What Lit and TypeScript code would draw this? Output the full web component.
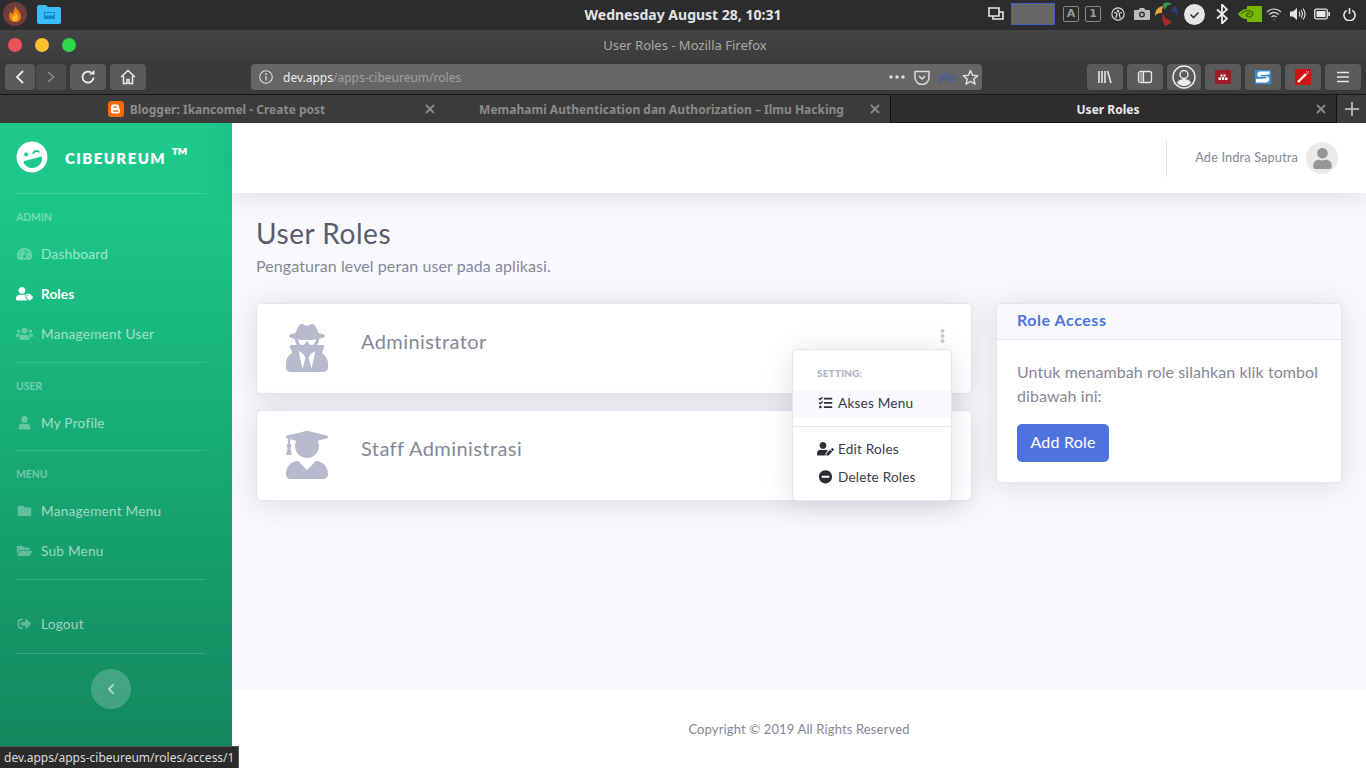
import { LitElement, html, css, svg } from 'lit';
import { customElement } from 'lit/decorators.js';

const fa = (vb: number, d: string) =>
  html`<svg viewBox="0 0 ${vb} 512" fill="currentColor" aria-hidden="true">${svg`<path d=${d}></path>`}</svg>`;

const I = {
  laugh: fa(496, 'M248 8C111 8 0 119 0 256s111 248 248 248 248-111 248-248S385 8 248 8zm20.1 198.1c4-25.2 34.2-42.1 59.9-42.1s55.9 16.9 59.9 42.1c1.7 11.1-11.4 18.3-19.8 10.8l-9.5-8.5c-14.8-13.2-46.2-13.2-61 0L288 217c-8.4 7.4-21.6.3-19.9-10.9zM168 160c17.7 0 32 14.3 32 32s-14.3 32-32 32-32-14.3-32-32 14.3-32 32-32zm230.9 146C390 377 329.4 432 256 432h-16c-73.4 0-134-55-142.9-126-1.2-9.5 6.3-18 15.9-18h270c9.6 0 17.1 8.4 15.9 18z'),
  dash: fa(576, 'M288 32C128.94 32 0 160.94 0 320c0 52.8 14.25 102.26 39.06 144.8 5.61 9.62 16.3 15.2 27.44 15.2h443c11.14 0 21.83-5.58 27.44-15.2C561.75 422.26 576 372.8 576 320c0-159.06-128.94-288-288-288zm0 64c14.71 0 26.58 10.13 30.32 23.65-1.11 2.26-2.64 4.23-3.45 6.67l-9.22 27.67c-5.13 3.49-10.97 6.01-17.64 6.01-17.67 0-32-14.33-32-32S270.33 96 288 96zM96 384c-17.67 0-32-14.33-32-32s14.33-32 32-32 32 14.33 32 32-14.33 32-32 32zm48-160c-17.67 0-32-14.33-32-32s14.33-32 32-32 32 14.33 32 32-14.33 32-32 32zm246.77-72.41l-61.33 184C343.13 347.33 352 364.54 352 384c0 11.72-3.38 22.55-8.88 32H232.88c-5.5-9.45-8.88-20.28-8.88-32 0-33.94 26.5-61.43 59.9-63.59l61.34-184.01c4.17-12.56 17.73-19.45 30.36-15.17 12.57 4.19 19.35 17.77 15.17 30.36zm14.66 57.2l15.52-46.55c3.47-1.29 7.13-2.23 11.05-2.23 17.67 0 32 14.33 32 32s-14.33 32-32 32c-11.38-.01-20.89-6.28-26.57-15.22zM480 384c-17.67 0-32-14.33-32-32s14.33-32 32-32 32 14.33 32 32-14.33 32-32 32z'),
  userTag: fa(640, 'M630.6 364.9l-90.3-90.2c-12-12-28.3-18.7-45.3-18.7h-79.3c-17.7 0-32 14.3-32 32v79.2c0 17 6.7 33.2 18.7 45.2l90.3 90.2c12.5 12.5 32.8 12.5 45.3 0l92.5-92.5c12.6-12.5 12.6-32.7.1-45.2zm-182.8-21c-13.3 0-24-10.7-24-24s10.7-24 24-24 24 10.7 24 24c0 13.2-10.7 24-24 24zm-223.8-88c70.7 0 128-57.3 128-128C352 57.3 294.7 0 224 0S96 57.3 96 128c0 70.6 57.3 127.9 128 127.9zm127.8 111.2V294c-12.2-3.6-24.9-6.2-38.2-6.2h-16.7c-22.2 10.2-46.9 16-72.9 16s-50.6-5.8-72.9-16h-16.7C60.2 287.9 0 348.1 0 422.3v41.6c0 26.5 21.5 48 48 48h352c15.5 0 29.1-7.5 37.9-18.9l-58-58c-18.1-18.1-28.1-42.2-28.1-67.9z'),
  users: fa(640, 'M96 224c35.3 0 64-28.7 64-64s-28.7-64-64-64-64 28.7-64 64 28.7 64 64 64zm448 0c35.3 0 64-28.7 64-64s-28.7-64-64-64-64 28.7-64 64 28.7 64 64 64zm32 32h-64c-17.6 0-33.5 7.1-45.1 18.6 40.3 22.1 68.9 62 75.1 109.4h66c17.7 0 32-14.3 32-32v-32c0-35.3-28.7-64-64-64zm-256 0c61.9 0 112-50.1 112-112S381.9 32 320 32 208 82.1 208 144s50.1 112 112 112zm76.8 32h-8.3c-20.8 10-43.9 16-68.5 16s-47.6-6-68.5-16h-8.3C179.6 288 128 339.6 128 403.2V432c0 26.5 21.5 48 48 48h288c26.5 0 48-21.5 48-48v-28.8c0-63.6-51.6-115.2-115.2-115.2zm-223.7-13.4C161.5 263.1 145.6 256 128 256H64c-35.3 0-64 28.7-64 64v32c0 17.7 14.3 32 32 32h65.9c6.3-47.4 34.9-87.3 75.2-109.4z'),
  user: fa(448, 'M224 256c70.7 0 128-57.3 128-128S294.7 0 224 0 96 57.3 96 128s57.3 128 128 128zm89.6 32h-16.7c-22.2 10.2-46.9 16-72.9 16s-50.6-5.8-72.9-16h-16.7C60.2 288 0 348.2 0 422.4V464c0 26.5 21.5 48 48 48h352c26.5 0 48-21.5 48-48v-41.6c0-74.2-60.2-134.4-134.4-134.4z'),
  folder: fa(512, 'M464 128H272l-64-64H48C21.49 64 0 85.49 0 112v288c0 26.51 21.49 48 48 48h416c26.51 0 48-21.49 48-48V176c0-26.51-21.49-48-48-48z'),
  folderOpen: fa(576, 'M572.694 292.093L500.27 416.248A63.997 63.997 0 0 1 444.989 448H45.025c-18.523 0-30.064-20.093-20.731-36.093l72.424-124.155A64 64 0 0 1 152 256h399.964c18.523 0 30.064 20.093 20.73 36.093zM152 224h328v-48c0-26.51-21.49-48-48-48H272l-64-64H48C21.49 64 0 85.49 0 112v278.046l69.077-118.418C86.214 242.25 117.989 224 152 224z'),
  signOut: fa(512, 'M497 273L329 441c-15 15-41 4.5-41-17v-96H152c-13.3 0-24-10.7-24-24v-96c0-13.3 10.7-24 24-24h136V88c0-21.4 25.9-32 41-17l168 168c9.3 9.4 9.3 24.6 0 34zM192 436v-40c0-6.6-5.4-12-12-12H96c-17.7 0-32-14.3-32-32V160c0-17.7 14.3-32 32-32h84c6.6 0 12-5.4 12-12V76c0-6.6-5.4-12-12-12H96c-53 0-96 43-96 96v192c0 53 43 96 96 96h84c6.6 0 12-5.4 12-12z'),
  secret: fa(448, 'M383.9 308.3l23.9-62.6c4-10.5-3.7-21.7-15-21.7h-58.5c11-18.9 17.8-40.6 17.8-64v-.3c39.2-7.8 64-19.1 64-31.7 0-13.3-27.3-25.1-70.1-33-9.2-32.8-27-65.8-40.6-82.8-9.5-11.9-25.9-15.6-39.5-8.8l-27.6 13.8c-9 4.5-19.6 4.5-28.6 0L182.1 3.4c-13.6-6.8-30-3.1-39.5 8.8-13.5 17-31.4 50-40.6 82.8-42.7 7.9-70 19.7-70 33 0 12.6 24.8 23.9 64 31.7v.3c0 23.4 6.8 45.1 17.8 64H56.3c-11.5 0-19.2 11.7-14.7 22.3l25.8 60.2C27.3 329.8 0 372.7 0 422.4v44.8C0 491.9 20.1 512 44.8 512h358.4c24.7 0 44.8-20.1 44.8-44.8v-44.8c0-48.4-25.8-90.4-64.1-114.1zM176 480l-41.6-192 49.6 32 24 40-32 120zm96 0l-32-120 24-40 49.6-32L272 480zm41.7-298.5c-3.9 11.9-7 24.6-16.5 33.4-10.1 9.3-48 22.4-64-25-2.8-8.4-15.4-8.4-18.3 0-17 50.2-56 32.4-64 25-9.5-8.8-12.7-21.5-16.5-33.4-.8-2.5-6.3-5.7-6.3-5.8v-10.8c28.3 3.6 61 5.8 96 5.8s67.7-2.1 96-5.8v10.8c-.1.1-5.6 3.2-6.4 5.8z'),
  grad: fa(448, 'M319.4 320.6L224 416l-95.4-95.4C57.1 323.7 0 382.2 0 454.4v9.6c0 26.5 21.5 48 48 48h352c26.5 0 48-21.5 48-48v-9.6c0-72.2-57.1-130.7-128.6-133.8zM13.6 79.8l6.4 1.5v58.4c-7 4.2-12 11.5-12 20.3 0 8.4 4.6 15.4 11.1 19.7L3.5 242c-1.7 6.9 2.1 14 7.6 14h41.8c5.5 0 9.3-7.1 7.6-14l-15.6-62.3C51.4 175.4 56 168.4 56 160c0-8.8-5-16.1-12-20.3V87.1l66 15.9c-8.6 17.2-14 36.4-14 57 0 70.7 57.3 128 128 128s128-57.3 128-128c0-20.6-5.3-39.8-14-57l96.3-23.2c18.2-4.4 18.2-27.1 0-31.5l-190.4-46c-13-3.1-26.7-3.1-39.7 0L13.6 48.2c-18.1 4.4-18.1 27.2 0 31.6z'),
  tasks: fa(512, 'M139.61 35.5a12 12 0 0 0-17 0L58.93 98.81l-22.7-22.12a12 12 0 0 0-17 0L3.53 92.41a12 12 0 0 0 0 17l47.59 47.4a12.78 12.78 0 0 0 17.61 0l15.59-15.62L156.52 69a12.09 12.09 0 0 0 .09-17zm0 159.19a12 12 0 0 0-17 0l-63.68 63.72-22.7-22.1a12 12 0 0 0-17 0L3.53 252a12 12 0 0 0 0 17L51 316.5a12.77 12.77 0 0 0 17.6 0l15.7-15.69 72.2-72.22a12 12 0 0 0 .09-16.9zM64 368c-26.49 0-48.59 21.5-48.59 48S37.53 464 64 464a48 48 0 0 0 0-96zm432 16H208a16 16 0 0 0-16 16v32a16 16 0 0 0 16 16h288a16 16 0 0 0 16-16v-32a16 16 0 0 0-16-16zm0-320H208a16 16 0 0 0-16 16v32a16 16 0 0 0 16 16h288a16 16 0 0 0 16-16V80a16 16 0 0 0-16-16zm0 160H208a16 16 0 0 0-16 16v32a16 16 0 0 0 16 16h288a16 16 0 0 0 16-16v-32a16 16 0 0 0-16-16z'),
  userEdit: fa(640, 'M224 256c70.7 0 128-57.3 128-128S294.7 0 224 0 96 57.3 96 128s57.3 128 128 128zm89.6 32h-16.7c-22.2 10.2-46.9 16-72.9 16s-50.6-5.8-72.9-16h-16.7C60.2 288 0 348.2 0 422.4V464c0 26.5 21.5 48 48 48h274.9c-2.4-6.8-3.4-14-2.6-21.3l6.8-60.9 1.2-11.1 7.9-7.9 77.3-77.3c-24.5-27.7-60-45.5-99.9-45.5zm45.3 145.3l-6.8 61c-1.1 10.2 7.5 18.8 17.6 17.6l60.9-6.8 137.9-137.9-71.7-71.7-137.9 137.8zM633 268.9L595.1 231c-9.3-9.3-24.5-9.3-33.8 0l-37.8 37.8-4.1 4.1 71.8 71.7 41.8-41.8c9.3-9.4 9.3-24.5 0-33.9z'),
  minus: fa(512, 'M256 8C119 8 8 119 8 256s111 248 248 248 248-111 248-248S393 8 256 8zM124 296c-6.6 0-12-5.4-12-12v-56c0-6.6 5.4-12 12-12h264c6.6 0 12 5.4 12 12v56c0 6.6-5.4 12-12 12H124z'),
  chevron: fa(320, 'M34.52 239.03L228.87 44.69c9.37-9.37 24.57-9.37 33.94 0l22.67 22.67c9.36 9.36 9.37 24.52.04 33.9L131.49 256l154.02 154.75c9.34 9.38 9.32 24.54-.04 33.9l-22.67 22.67c-9.37 9.37-24.57 9.37-33.94 0L34.52 272.97c-9.37-9.37-9.37-24.57 0-33.94z'),
};

// free-form icons of the desktop and browser chrome
const ico = (vb: string, body: unknown) =>
  html`<svg viewBox=${vb} aria-hidden="true">${body}</svg>`;

const tray = [
  { w: 16, gap: 0, icon: ico('0 0 16 16', svg`<path d="M1 2h10v8H1z M5 10v3h10V6h-4" fill="none" stroke="#e6e6e6" stroke-width="1.600"/>`) },
  { w: 44, gap: 7, icon: html`<span class="wsbox"></span>` },
  { w: 16, gap: 8, icon: html`<span class="key">A</span>` },
  { w: 16, gap: 6, icon: html`<span class="key">1</span>` },
  { w: 14, gap: 10, icon: ico('0 0 16 16', svg`<circle cx="8" cy="8" r="7" fill="none" stroke="#ddd" stroke-width="1.300"/><circle cx="8" cy="4.500" r="1.400" fill="#ddd"/><path d="M3.500 6.300l3 .7v2.200L5.200 13M12.500 6.300l-3 .7v2.200l1.300 3.800" fill="none" stroke="#ddd" stroke-width="1.400"/>`) },
  { w: 16, gap: 9, icon: ico('0 0 16 14', svg`<path d="M1 3h3.500L6 1h4l1.500 2H15a1 1 0 0 1 1 1v8a1 1 0 0 1-1 1H1a1 1 0 0 1-1-1V4a1 1 0 0 1 1-1z" fill="#bbb"/><circle cx="8" cy="7.500" r="3" fill="#333"/><circle cx="8" cy="7.500" r="1.500" fill="#bbb"/>`) },
  { w: 23, gap: 5, icon: ico('0 0 23 24', svg`<path d="M0 14C0 8 3 4.500 9 4 7 6.500 6.500 9 7 11 4 10.500 2 11.500 0 14z" fill="#eda53a"/><path d="M8 2c2-2 6-2 9 0-3 0-6 2-7.500 6C9.500 6 9 4 8 2z" fill="#3f9a52"/><path d="M18.500 3C22 5.500 23.500 9 22 14c-.5-2.500-2.500-4.500-6.500-5 2-1.500 3.500-3.500 3-6z" fill="#23407f"/><path d="M8 11c1 4 4 7 8.500 8-1.500 3-4 4.500-6.500 5C7.500 20 6.500 15 8 11z" fill="#a62a26"/>`) },
  { w: 21, gap: 6, icon: ico('0 0 21 21', svg`<circle cx="10.500" cy="10.500" r="10.500" fill="#e6e6e6"/><path d="M6.500 10.500l3 3 5-5" fill="none" stroke="#3a3a3a" stroke-width="1.600"/>`) },
  { w: 12, gap: 11, icon: ico('0 0 12 20', svg`<path d="M1 5.500l10 9-5 5V.500l5 5-10 9" fill="none" stroke="#eee" stroke-width="1.800"/>`) },
  { w: 24, gap: 10, icon: ico('0 0 24 16', svg`<path d="M9 0h15v16H9v-3c-4 0-7-2-9-5 2-3 5-5 9-5z" fill="#7ab800"/><path d="M3 8c3-3.500 8-4.500 11-2 2 2 0 5-3 5-2 0-3-1.500-2-3s3-1 3 .5" fill="none" stroke="#3b5a00" stroke-width="1.100"/>`) },
  { w: 16, gap: 4, icon: ico('0 0 16 14', svg`<path d="M1 5c4-4 10-4 14 0M3.200 7.500c3-2.700 6.600-2.700 9.600 0M5.500 10c1.500-1.300 3.500-1.300 5 0" fill="none" stroke="#ddd" stroke-width="1.100"/><circle cx="8" cy="12.500" r="1" fill="#666"/>`) },
  { w: 16, gap: 8, icon: ico('0 0 16 14', svg`<path d="M0 4.500h3L7 1v12L3 9.500H0z" fill="#e6e6e6"/><path d="M9 4.500c1 1.500 1 3.500 0 5M11 3c1.800 2.500 1.800 5.500 0 8M13 1.500c2.600 3.500 2.600 7.500 0 11" fill="none" stroke="#e6e6e6" stroke-width="1.100"/>`) },
  { w: 16, gap: 8, icon: ico('0 0 16 12', svg`<rect x=".7" y="1.200" width="12.600" height="9.600" rx="1.500" fill="none" stroke="#e6e6e6" stroke-width="1.300"/><rect x="2.500" y="3" width="9" height="6" fill="#e6e6e6"/><rect x="14.300" y="4" width="1.700" height="4" fill="#e6e6e6"/>`) },
  { w: 13, gap: 13, icon: ico('0 0 14 14', svg`<path d="M4 2.500a6 6 0 1 0 6 0" fill="none" stroke="#e6e6e6" stroke-width="1.700"/><path d="M7 0v6.500" stroke="#e6e6e6" stroke-width="1.700"/>`) },
];

const rightButtons = [
  ico('0 0 16 16', svg`<path d="M2 2v12M5 2v12M8 2v12M10.500 2l3.500 12" fill="none" stroke="#e6e6e6" stroke-width="1.600"/>`),
  ico('0 0 16 16', svg`<rect x="1.500" y="2.500" width="13" height="11" rx="2" fill="none" stroke="#e6e6e6" stroke-width="1.300"/><path d="M6.500 3v10" stroke="#e6e6e6" stroke-width="1.300"/><rect x="2.500" y="3.500" width="3.500" height="9" fill="#9c9c9c"/>`),
  null,
  ico('0 0 16 16', svg`<rect y="1" width="16" height="14" fill="#9d1c28"/><path d="M5.500 5.500h2v2h-2zM8.500 5.500h2v2h-2zM3.500 8.500h2.500v2.500H3.500zM6.800 8h2.400v3H6.800zM10 8.500h2.500v2.500H10z" fill="#fff"/>`),
  ico('0 0 16 16', svg`<rect y="1" width="16" height="14" fill="#3d8fd1"/><path d="M15 2.500L5 2.500C1.500 3 1.500 7.500 4.500 8h6.500c.8.3.6 1.500-.2 1.600L1 10v3.500h10c3.500-.5 4.500-4.500 1.500-6H6c-.8-.2-.6-1.400.2-1.500L14 5.500z" fill="#fff"/>`),
  ico('0 0 16 16', svg`<rect width="16" height="16" fill="#cf1414"/><path d="M3 13l8-8" stroke="#fff" stroke-width="2.400"/><path d="M11.500 2.500l.5 1M13.500 4l-1 .5M13.500 2.500l-.5.500" stroke="#fff" stroke-width="1"/>`),
  ico('0 0 16 16', svg`<path d="M2 3.500h12M2 8h12M2 12.500h12" stroke="#e6e6e6" stroke-width="1.700"/>`),
];

const sections = [
  {
    title: 'ADMIN',
    items: [
      { label: 'Dashboard', icon: I.dash },
      { label: 'Roles', icon: I.userTag, active: true },
      { label: 'Management User', icon: I.users },
    ],
  },
  { title: 'USER', items: [{ label: 'My Profile', icon: I.user }] },
  {
    title: 'MENU',
    items: [
      { label: 'Management Menu', icon: I.folder },
      { label: 'Sub Menu', icon: I.folderOpen },
    ],
  },
];

const tabs = [
  { label: 'Blogger: Ikancomel - Create post', favicon: true },
  { label: 'Memahami Authentication dan Authorization – Ilmu Hacking' },
  { label: 'User Roles', current: true },
];

@customElement('app-root')
export class AppRoot extends LitElement {
  static styles = css`
    :host {
      display: block;
      width: 1366px;
      height: 768px;
      overflow: hidden;
      position: relative;
      font-family: 'Lato', 'Noto Sans', sans-serif;
      color: #858796;
    }

    svg {
      display: block;
    }

    /* desktop bar */
    .desktop {
      height: 30px;
      box-sizing: border-box;
      padding-bottom: 2px;
      background: #2a2c2e;
      display: grid;
      grid-template-columns: 1fr auto 1fr;
      align-items: center;
    }
    .launcher {
      display: flex;
      align-items: center;
      padding-left: 3px;
    }
    .flame {
      width: 24px;
      height: 24px;
      border-radius: 50%;
      background: #6f3d3b;
      display: flex;
      align-items: center;
      justify-content: center;
    }
    .flame svg {
      width: 14px;
      height: 16px;
    }
    .files {
      width: 24px;
      height: 19px;
      margin-left: 10px;
    }
    .clock {
      font: 700 14px 'Noto Sans', sans-serif;
      color: #e4e4e4;
    }
    .tray {
      display: flex;
      align-items: center;
      justify-content: flex-end;
      padding-right: 10px;
    }
    .tray-item {
      flex: none;
      display: flex;
      align-items: center;
      justify-content: center;
    }
    .tray-item svg {
      width: 100%;
    }
    .wsbox {
      display: block;
      width: 44px;
      height: 22px;
      box-sizing: border-box;
      background: #666;
      border: 1px solid #3f5fc4;
    }
    .key {
      display: block;
      width: 16px;
      height: 16px;
      box-sizing: border-box;
      border: 1px solid #888;
      border-radius: 2px;
      color: #999;
      font: 700 11px/14px 'DejaVu Sans', sans-serif;
      text-align: center;
    }

    /* window title */
    .titlebar {
      height: 29px;
      background: linear-gradient(#444, #3c3c3c);
      display: grid;
      grid-template-columns: 1fr auto 1fr;
      align-items: center;
      color: #a8a8a8;
      font: 13px 'Noto Sans', sans-serif;
    }
    .title-text {
      padding-left: 4px;
    }
    .lights {
      display: flex;
      gap: 13px;
      padding-left: 8px;
    }
    .light {
      width: 14px;
      height: 14px;
      border-radius: 50%;
    }
    .red {
      background: #f0505a;
    }
    .yellow {
      background: #fdbf2d;
    }
    .green {
      background: #2fd84a;
    }

    /* toolbar */
    .toolbar {
      height: 36px;
      box-sizing: border-box;
      padding: 5px 5px 5px;
      background: #3a3a3a;
      border-bottom: 1px solid #161616;
      display: flex;
      align-items: flex-start;
    }
    .btn {
      flex: none;
      height: 26px;
      width: 36px;
      border-radius: 4px;
      background: #5b5b5b;
      display: flex;
      align-items: center;
      justify-content: center;
    }
    .btn svg {
      width: 16px;
      height: 16px;
    }
    .btn.nav {
      width: 30px;
    }
    .btn.off {
      background: #4c4c4c;
    }
    .back {
      margin-right: 1px;
    }
    .reload {
      margin-left: 4px;
    }
    .home {
      margin-left: 4px;
    }
    .urlbar {
      flex: none;
      width: 731px;
      height: 26px;
      margin: 0 105px 0 105px;
      box-sizing: border-box;
      padding: 0 3px 0 8px;
      border-radius: 4px;
      background: #666;
      display: flex;
      align-items: center;
      font: 12px 'Noto Sans', sans-serif;
      color: #a0a0a0;
    }
    .urlbar .info {
      width: 14px;
      height: 14px;
      margin-right: 10px;
    }
    .urlbar b {
      font-weight: 400;
      color: #eee;
    }
    .url {
      flex: 1;
    }
    .url-actions {
      display: flex;
      align-items: center;
    }
    .dots {
      width: 16px;
      height: 4px;
      margin-right: 9px;
    }
    .pocket {
      width: 16px;
      height: 15px;
      margin-right: 8px;
    }
    .php {
      font: italic 700 10px 'Liberation Sans', sans-serif;
      color: #4a5a96;
      width: 24px;
    }
    .star {
      width: 17px;
      height: 17px;
    }
    .right-btns {
      display: flex;
      gap: 4px;
    }
    .right-btns .btn.avatar {
      width: 34px;
    }
    .right-btns .btn.avatar svg {
      width: 24px;
      height: 24px;
    }

    /* tabs */
    .tabs {
      height: 28px;
      background: #3c3c3c;
      display: flex;
      font: 700 12px 'Noto Sans', sans-serif;
      color: #8c8c8c;
    }
    .tab {
      flex: none;
      width: 445px;
      box-sizing: border-box;
      display: flex;
      align-items: center;
      justify-content: center;
      position: relative;
      padding-right: 12px;
      gap: 6px;
    }
    .tab.current {
      width: 447px;
      padding: 1px 11px 0 0;
      background: #2e2e2e;
      color: #f0f0f0;
      border-left: 1px solid #111;
      border-right: 1px solid #111;
      border-bottom: 1px solid #111;
    }
    .tab .close {
      position: absolute;
      right: 10px;
      top: 9px;
      width: 10px;
      height: 10px;
      color: #8c8c8c;
    }
    .favicon {
      width: 16px;
      height: 16px;
      border-radius: 3px;
      background: #f36a10;
      color: #fff;
    }
    .plus {
      flex: 1;
      display: flex;
      align-items: center;
      justify-content: center;
    }
    .plus svg {
      width: 14px;
      height: 14px;
    }

    /* app */
    .app {
      height: 645px;
      display: flex;
    }
    .sidebar {
      flex: none;
      width: 232px;
      box-sizing: border-box;
      padding: 0 26px 0 16px;
      background: linear-gradient(180deg, #1cc88a 10%, #13855c 100%);
      color: rgba(255, 255, 255, 0.6);
    }
    .brand {
      height: 70px;
      display: flex;
      align-items: center;
      color: #fff;
    }
    .brand-icon {
      flex: none;
      width: 32px;
      height: 32px;
      transform: rotate(-15deg);
      margin-top: -2px;
    }
    .brand-icon svg {
      width: 32px;
      height: 32px;
    }
    .brand-text {
      margin-left: 17px;
      font-size: 15px;
      font-weight: 800;
      letter-spacing: 1.4px;
      white-space: nowrap;
      margin-top: -2px;
    }
    .brand-text span {
      font-size: 22px;
      font-weight: 700;
      line-height: 15px;
    }
    .rule {
      height: 1px;
      background: rgba(255, 255, 255, 0.15);
    }
    .section {
      margin-bottom: 8px;
    }
    .heading {
      height: 39.5px;
      box-sizing: border-box;
      padding-top: 7px;
      display: flex;
      align-items: center;
      font-size: 10.4px;
      font-weight: 700;
      color: rgba(255, 255, 255, 0.4);
    }
    .item {
      height: 40px;
      box-sizing: border-box;
      padding-top: 1.5px;
      display: flex;
      align-items: center;
      font-size: 13.6px;
      letter-spacing: 0.25px;
    }
    .item.active {
      color: #fff;
      font-weight: 700;
      letter-spacing: 0.1px;
    }
    .item svg {
      flex: none;
      width: 17px;
      height: 13.6px;
      margin-right: 8px;
      opacity: 0.55;
    }
    .item.active svg {
      opacity: 1;
    }
    .logout {
      margin: 24px 0 9px;
    }
    .toggle {
      width: 40px;
      height: 40px;
      border-radius: 50%;
      margin: 15.5px 0 0 75px;
      background: rgba(255, 255, 255, 0.2);
      color: rgba(255, 255, 255, 0.6);
      display: flex;
      align-items: center;
      justify-content: center;
    }
    .toggle svg {
      width: 8px;
      height: 12px;
    }

    .main {
      flex: 1;
      display: flex;
      flex-direction: column;
      min-width: 0;
      background: #f8f9fc;
    }
    .topbar {
      flex: none;
      height: 70px;
      box-sizing: border-box;
      background: #fff;
      box-shadow: 0 0.15rem 1.75rem rgba(58, 59, 69, 0.15);
      display: flex;
      align-items: center;
      justify-content: flex-end;
      padding-right: 28px;
      position: relative;
      font-size: 12.8px;
    }
    .topbar-rule {
      width: 1px;
      height: 38px;
      background: #e3e6f0;
      margin-right: 28px;
    }
    .user-name {
      padding-bottom: 2px;
      letter-spacing: 0.12px;
    }
    .avatar-round {
      width: 32px;
      height: 32px;
      margin-left: 8px;
      border-radius: 50%;
      background: #eaeaea;
      color: #969696;
      display: flex;
      align-items: center;
      justify-content: center;
    }
    .avatar-round svg {
      width: 19px;
      height: 21px;
    }

    .page {
      flex: 1;
      padding: 24px 24px 0;
    }
    h1 {
      margin: 0;
      font-size: 28px;
      font-weight: 400;
      line-height: 33px;
      color: #5a5c69;
      letter-spacing: 0.55px;
    }
    .lead {
      margin: 4px 0 0;
      font-size: 16px;
      line-height: 24px;
      letter-spacing: 0.08px;
    }
    .columns {
      margin-top: 25px;
      display: grid;
      grid-template-columns: 716px 346px;
      gap: 24px;
      align-items: start;
    }
    .card {
      box-sizing: border-box;
      background: #fff;
      border: 1px solid #e3e6f0;
      border-radius: 5px;
      box-shadow: 0 0.15rem 1.75rem rgba(58, 59, 69, 0.15);
    }
    .role {
      height: 91px;
      padding: 20px 29px;
      display: flex;
      gap: 33px;
      position: relative;
    }
    .role + .role {
      margin-top: 16px;
    }
    .role > svg {
      flex: none;
      width: 42px;
      height: 48px;
      color: #b7b9cc;
    }
    .role-name {
      font-size: 20px;
      line-height: 34px;
      letter-spacing: 0.42px;
    }
    .kebab {
      position: absolute;
      top: 25px;
      right: 26px;
      width: 5px;
      height: 14px;
    }
    .kebab svg {
      width: 5px;
      height: 14px;
    }
    .menu {
      position: absolute;
      top: 45px;
      right: 19px;
      width: 160px;
      height: 152px;
      box-sizing: border-box;
      padding-top: 16px;
      background: #fff;
      border: 1px solid #e3e6f0;
      border-radius: 5px;
      box-shadow: 0 0.15rem 1.75rem rgba(58, 59, 69, 0.15);
      z-index: 2;
      color: #3a3b45;
      font-size: 13.6px;
    }
    .menu-head {
      height: 14px;
      padding-left: 24px;
      font-size: 10.2px;
      line-height: 14px;
      font-weight: 800;
      color: #b7b9cc;
      margin-bottom: 10px;
    }
    .menu-item {
      height: 28px;
      box-sizing: border-box;
      padding: 0 0 2px 24px;
      display: flex;
      align-items: center;
      letter-spacing: 0.2px;
    }
    .menu-item.hover {
      background: #f8f9fc;
    }
    .menu-item svg {
      flex: none;
      width: 17px;
      height: 13.6px;
      margin-right: 4px;
      color: #2c2d36;
    }
    .menu-rule {
      height: 1px;
      margin: 8px 0 9px;
      background: #e3e6f0;
    }

    .access-head {
      height: 36px;
      box-sizing: border-box;
      padding: 0 0 4px 20px;
      display: flex;
      align-items: center;
      background: #f8f9fc;
      border-bottom: 1px solid #e3e6f0;
      border-radius: 5px 5px 0 0;
      font-size: 16px;
      font-weight: 700;
      color: #4e73df;
      letter-spacing: 0.55px;
    }
    .access-body {
      padding: 20px;
      font-size: 16px;
      line-height: 24px;
      letter-spacing: 0.08px;
    }
    .access-body p {
      margin: 0 0 16px;
    }
    .add {
      display: block;
      box-sizing: border-box;
      width: 92px;
      height: 38px;
      border: 0;
      padding: 0 0 3px;
      border-radius: 5px;
      background: #4e73df;
      color: #fff;
      font: 16px 'Lato', 'Noto Sans', sans-serif;
      letter-spacing: 0.2px;
    }
    footer {
      flex: none;
      height: 78px;
      box-sizing: border-box;
      padding-top: 30px;
      background: #fff;
      text-align: center;
      font-size: 13px;
      line-height: 18px;
      letter-spacing: 0.14px;
    }
    .status {
      position: absolute;
      left: 0;
      bottom: 0;
      height: 22px;
      box-sizing: border-box;
      padding: 0 4px;
      background: #2b2b2b;
      border: 1px solid #555;
      border-width: 1px 1px 0 0;
      color: #dcdcdc;
      font: 12px/21px 'Noto Sans', sans-serif;
      white-space: nowrap;
    }
  `;

  render() {
    return html`
      ${this.renderDesktop()} ${this.renderBrowser()}
      <div class="app">${this.renderSidebar()}${this.renderMain()}</div>
      <div class="status">dev.apps/apps-cibeureum/roles/access/1</div>
    `;
  }

  renderDesktop() {
    return html`
      <div class="desktop">
        <div class="launcher">
          <span class="flame">
            ${ico('0 0 14 16', svg`<path d="M7 0c1 3 4 4 5 7 1 2 2 5-1 8-1 1-3 1-4 1-3 0-6-2-6-6 0-2 1-3 2-5 0 2 1 2 2 3 0-3 1-5 3-8z" fill="#ef7d0a"/><path d="M7.500 6c1 2 3 3 2.500 6-.3 2-2 3-3 3-2 0-3-1.500-3-3 0-1 .5-2 1-2.500.3 1 .7 1.200 1.200 1.500C6.500 9 7 7.500 7.500 6z" fill="#fbb72c"/>`)}
          </span>
          <span class="files">
            ${ico('0 0 24 19', svg`<path d="M0 2a2 2 0 0 1 2-2h7l2 2h11a2 2 0 0 1 2 2v13a2 2 0 0 1-2 2H2a2 2 0 0 1-2-2z" fill="#3cbdf8"/><rect x="7" y="7" width="11" height="7" fill="#1487c8"/><rect x="8" y="8" width="9" height="2.500" fill="#3cbdf8"/>`)}
          </span>
        </div>
        <div class="clock">Wednesday August 28, 10:31</div>
        <div class="tray">
          ${tray.map(
            (t) => html`<span class="tray-item" style="width:${t.w}px;margin-left:${t.gap}px">${t.icon}</span>`
          )}
        </div>
      </div>
    `;
  }

  renderBrowser() {
    return html`
      <div class="titlebar">
        <div class="lights">
          <span class="light red"></span><span class="light yellow"></span><span class="light green"></span>
        </div>
        <div class="title-text">User Roles - Mozilla Firefox</div>
        <div></div>
      </div>
      <div class="toolbar">
        <span class="btn nav back">
          ${ico('0 0 16 16', svg`<path d="M11 2L5 8l6 6" fill="none" stroke="#eee" stroke-width="1.800"/>`)}
        </span>
        <span class="btn nav off">
          ${ico('0 0 16 16', svg`<path d="M5 3l5.500 5L5 13" fill="none" stroke="#8c8c8c" stroke-width="1.500"/>`)}
        </span>
        <span class="btn reload">
          ${ico('0 0 16 16', svg`<path d="M13.500 8.500A5.500 5.500 0 1 1 11 3.500" fill="none" stroke="#eee" stroke-width="1.800"/><path d="M9 5.500h5.500V1z" fill="#eee"/>`)}
        </span>
        <span class="btn home">
          ${ico('0 0 16 16', svg`<path d="M1 8l7-6.500L15 8M3.500 7v7.500h3.500v-4h2v4h3.500V7" fill="none" stroke="#eee" stroke-width="1.500"/>`)}
        </span>
        <div class="urlbar">
          <span class="info">
            ${ico('0 0 14 14', svg`<circle cx="7" cy="7" r="6.300" fill="none" stroke="#ddd" stroke-width="1.100"/><path d="M7 6v4.500" stroke="#ddd" stroke-width="1.300"/><circle cx="7" cy="4" r=".9" fill="#ddd"/>`)}
          </span>
          <span class="url"><b>dev.apps</b>/apps-cibeureum/roles</span>
          <span class="url-actions">
            <span class="dots">
              ${ico('0 0 16 4', svg`<circle cx="2" cy="2" r="1.700" fill="#ddd"/><circle cx="8" cy="2" r="1.700" fill="#ddd"/><circle cx="14" cy="2" r="1.700" fill="#ddd"/>`)}
            </span>
            <span class="pocket">
              ${ico('0 0 16 15', svg`<path d="M1 1.500h14v6a7 7 0 0 1-14 0z" fill="none" stroke="#ddd" stroke-width="1.500" stroke-linejoin="round"/><path d="M5 6l3 3 3-3" fill="none" stroke="#ddd" stroke-width="1.500"/>`)}
            </span>
            <span class="php">php</span>
            <span class="star">
              ${ico('0 0 17 17', svg`<path d="M8.500 1.500l2.100 4.700 5.100.5-3.900 3.400 1.200 5-4.500-2.700-4.500 2.700 1.200-5L1.300 6.700l5.100-.5z" fill="none" stroke="#ddd" stroke-width="1.500" stroke-linejoin="round"/>`)}
            </span>
          </span>
        </div>
        <div class="right-btns">
          ${rightButtons.map((b) =>
            b
              ? html`<span class="btn">${b}</span>`
              : html`<span class="btn avatar">
                  ${ico('0 0 24 24', svg`<circle cx="12" cy="12" r="11" fill="none" stroke="#eee" stroke-width="1.400"/><circle cx="12" cy="9.500" r="4" fill="none" stroke="#eee" stroke-width="1.400"/><path d="M5 18c1-3 4-4 7-4s6 1 7 4c-2 2-4 3-7 3s-5-1-7-3z" fill="#eee"/>`)}
                </span>`
          )}
        </div>
      </div>
      <div class="tabs">
        ${tabs.map(
          (t) => html`
            <div class="tab ${t.current ? 'current' : ''}">
              ${t.favicon
                ? html`<span class="favicon">
                    ${ico('0 0 16 16', svg`<path d="M5 3.500h4a2 2 0 0 1 2 2V7a1 1 0 0 0 1 1v2.500a2 2 0 0 1-2 2H5a2 2 0 0 1-2-2v-5a2 2 0 0 1 2-2z" fill="#fff"/><path d="M5.500 6h3M5.500 10h5" stroke="#f36a10" stroke-width="1.300"/>`)}
                  </span>`
                : ''}
              <span>${t.label}</span>
              <span class="close">
                ${ico('0 0 10 10', svg`<path d="M1 1l8 8M9 1l-8 8" stroke="#8c8c8c" stroke-width="1.800"/>`)}
              </span>
            </div>
          `
        )}
        <div class="plus">
          ${ico('0 0 14 14', svg`<path d="M7 0v14M0 7h14" stroke="#cfcfcf" stroke-width="1.500"/>`)}
        </div>
      </div>
    `;
  }

  renderSidebar() {
    return html`
      <aside class="sidebar">
        <div class="brand">
          <span class="brand-icon">${I.laugh}</span>
          <span class="brand-text">CIBEUREUM <span>™</span></span>
        </div>
        <div class="rule"></div>
        ${sections.map(
          (s) => html`
            <div class="section">
              <div class="heading">${s.title}</div>
              ${s.items.map(
                (i) => html`<div class="item ${i.active ? 'active' : ''}">${i.icon}<span>${i.label}</span></div>`
              )}
            </div>
            <div class="rule"></div>
          `
        )}
        <div class="item logout">${I.signOut}<span>Logout</span></div>
        <div class="rule"></div>
        <div class="toggle">${I.chevron}</div>
      </aside>
    `;
  }

  renderMain() {
    return html`
      <div class="main">
        <header class="topbar">
          <span class="topbar-rule"></span>
          <span class="user-name">Ade Indra Saputra</span>
          <span class="avatar-round">${I.user}</span>
        </header>
        <main class="page">
          <h1>User Roles</h1>
          <p class="lead">Pengaturan level peran user pada aplikasi.</p>
          <div class="columns">
            <div>
              <div class="card role">
                ${I.secret}
                <div class="role-name">Administrator</div>
                <span class="kebab">
                  ${ico('0 0 5 14', svg`<circle cx="2.500" cy="2" r="2" fill="#c9cbd9"/><circle cx="2.500" cy="7" r="2" fill="#c9cbd9"/><circle cx="2.500" cy="12" r="2" fill="#c9cbd9"/>`)}
                </span>
                <div class="menu">
                  <div class="menu-head">SETTING:</div>
                  <div class="menu-item hover">${I.tasks}<span>Akses Menu</span></div>
                  <div class="menu-rule"></div>
                  <div class="menu-item">${I.userEdit}<span>Edit Roles</span></div>
                  <div class="menu-item">${I.minus}<span>Delete Roles</span></div>
                </div>
              </div>
              <div class="card role">
                ${I.grad}
                <div class="role-name">Staff Administrasi</div>
              </div>
            </div>
            <div class="card">
              <div class="access-head">Role Access</div>
              <div class="access-body">
                <p>Untuk menambah role silahkan klik tombol dibawah ini:</p>
                <button class="add">Add Role</button>
              </div>
            </div>
          </div>
        </main>
        <footer>Copyright © 2019 All Rights Reserved</footer>
      </div>
    `;
  }
}

declare global {
  interface HTMLElementTagNameMap {
    'app-root': AppRoot;
  }
}
